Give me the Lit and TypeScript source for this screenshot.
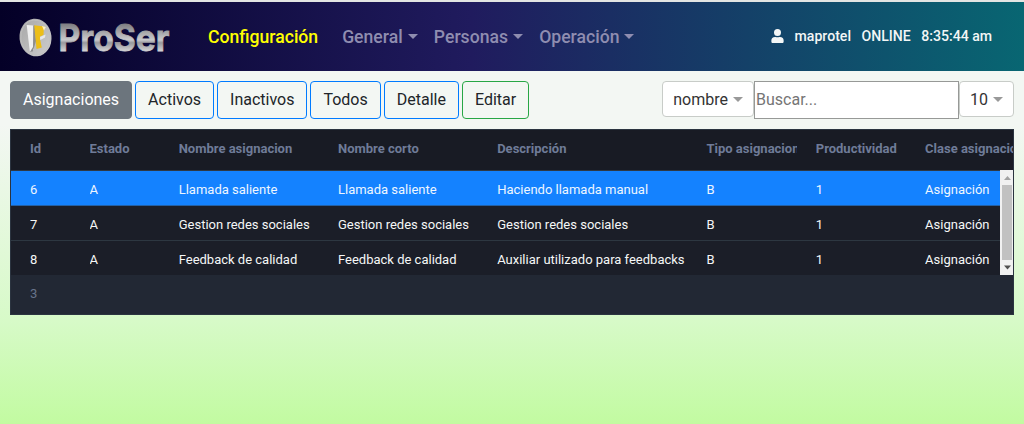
import { LitElement, html, svg, css } from "lit";
import { customElement, property } from "lit/decorators.js";
import { classMap } from "lit/directives/class-map.js";

interface Row {
  cells: string[];
  selected?: boolean;
}

@customElement("brand-logo")
class BrandLogo extends LitElement {
  static styles = css`
    :host { display: block; width: 156px; height: 46px; }
    svg { display: block; }
    .word { font: 700 36.5px Inter, "Liberation Sans", sans-serif; }
  `;
  render() {
    return html`<svg width="156" height="46" viewBox="0 0 156 46">
      ${svg`
      <defs>
        <linearGradient id="metal" gradientUnits="userSpaceOnUse" x1="0" y1="9.5" x2="0" y2="38.5">
          <stop offset="0" stop-color="#77777b"/>
          <stop offset=".4" stop-color="#b0b0b2"/>
          <stop offset=".6" stop-color="#cacacc"/>
          <stop offset=".7" stop-color="#98989c"/>
          <stop offset="1" stop-color="#d6d6d8"/>
        </linearGradient>
        <linearGradient id="disc" x1="0" y1="0" x2="1" y2="1">
          <stop offset="0" stop-color="#a6a6a6"/>
          <stop offset="1" stop-color="#cecece"/>
        </linearGradient>
      </defs>
      <g transform="rotate(-6 19.5 24.5)">
        <ellipse cx="19.5" cy="24.5" rx="16" ry="18.9" fill="url(#disc)"/>
        <ellipse cx="19.5" cy="24.5" rx="14.7" ry="17.5" fill="none" stroke="#bfbfbf" stroke-width=".8"/>
      </g>
      <path d="M10.700 12 17.500 12.500 17.800 37 13.800 38.500Z" fill="#f0f0f0"/>
      <path d="M17.300 12.500 18.700 12.500 20 28 16.800 38.500 14 38.700 17 34Z" fill="#8e8e8e"/>
      <path d="M18.200 12.300 28 13.500 27.500 22 24 23.500 24 26 25.800 34.500 20.500 36 19.500 25Z" fill="#ecbe18"/>
      <path d="M26 13 29.800 14 28 17.500Z" fill="#fff3c0"/>
      <path d="M24 24 29.500 21.500 29 24.500 24.300 27Z" fill="#e8e8e8"/>
      <text class="word" x="42.500" y="37.700" textLength="111" lengthAdjust="spacingAndGlyphs" fill="url(#metal)" stroke="url(#metal)" stroke-width=".8">ProSer</text>`}
    </svg>`;
  }
}

@customElement("tool-button")
class ToolButton extends LitElement {
  @property() variant = "primary";
  static styles = css`
    :host { display: block; }
    button {
      display: block; box-sizing: border-box; height: 38px; padding: 0 12px;
      border: 1px solid #007bff; border-radius: 4px; background: transparent;
      color: #212529; font: 16px/36px Roboto, sans-serif;
    }
    .active { background: #6c757d; border-color: #6c757d; color: #fff; }
    .success { border-color: #28a745; }
  `;
  render() {
    return html`<button class=${this.variant}><slot></slot></button>`;
  }
}

@customElement("data-grid")
class DataGrid extends LitElement {
  @property({ attribute: false }) columns: string[] = [];
  @property({ attribute: false }) rows: Row[] = [];
  static styles = css`
    :host {
      display: block; box-sizing: border-box; height: 186px; overflow: hidden;
      border: 1px solid #2b3440; background: #222834;
      font: 13px/17px Roboto, sans-serif; color: #f5f7f7;
    }
    .line {
      display: grid; box-sizing: border-box; width: 1100px; align-items: center;
      grid-template-columns: 59.5px 89.2px 159.3px 159.2px 209.3px 109.300px 109.3px 1fr;
      padding-left: 19px;
    }
    .line span { overflow: hidden; white-space: nowrap; }
    .head {
      height: 41px; padding-bottom: 3px; background: #181b24; border-bottom: 1px solid #2f3843;
      color: #6f7b98; font-weight: 700;
    }
    .head span { margin-right: 19px; }
    .middle { display: flex; height: 105px; }
    .rows { flex: 1; overflow: hidden; }
    .row { height: 35px; padding-top: 2px; background: #1b1e28; border-bottom: 1px solid #2d3741; }
    .row:last-child { border-bottom-color: #222834; }
    .selected { background: #1482ff; border-bottom-color: #2360a5; color: #eef6ff; }
    .scroll {
      display: flex; flex-direction: column; align-items: center; width: 13px;
      margin-top: -1px; height: 105px; background: #f1f1f1;
    }
    .scroll svg { flex: none; display: block; }
    .thumb { flex: 1; align-self: stretch; margin: 0 1px 0 2px; background: #c1c1c1; }
    .foot { padding: 9px 19px; color: #68748a; }
  `;
  render() {
    return html`
      <div class="line head">${this.columns.map((c) => html`<span>${c}</span>`)}</div>
      <div class="middle">
        <div class="rows">
          ${this.rows.map(
            (r) => html`<div class=${classMap({ line: true, row: true, selected: !!r.selected })}>
              ${r.cells.map((c) => html`<span>${c}</span>`)}
            </div>`,
          )}
        </div>
        <div class="scroll">
          <svg width="13" height="15"><path d="M4 10h7L7.500 6Z" fill="#a3a3a3" /></svg>
          <div class="thumb"></div>
          <svg width="13" height="15"><path d="M4 5.500h7L7.500 9.500Z" fill="#505050" /></svg>
        </div>
      </div>
      <div class="foot">${this.rows.length}</div>
    `;
  }
}

@customElement("app-root")
class AppRoot extends LitElement {
  static styles = css`
    :host {
      display: block; box-sizing: border-box; height: 424px; overflow: hidden;
      background: linear-gradient(#f3f7f3 0, #f3f7f3 125px, #d7fac8 320px, #c2fba1 424px);
      font-family: Roboto, sans-serif;
    }
    header {
      display: flex; align-items: center; box-sizing: border-box; height: 71px;
      padding: 0 32px 0 16px; border-top: 2px solid #e3e5e3;
      background: linear-gradient(to right, #040027 0%, #201b5e 46%, #086672 100%) padding-box;
      font-weight: 500;
    }
    brand-logo { margin-bottom: 2px; }
    nav { display: flex; font-size: 17.6px; line-height: 24px; margin-left: 36px; color: #8f8db0; }
    .current { color: #ff0; margin-right: 24px; }
    .item { display: flex; align-items: center; margin-right: 16.2px; }
    .caret {
      margin-left: 5px; border: 5.28px solid transparent; border-top-color: currentColor; border-bottom: 0;
    }
    .user {
      display: flex; align-items: center; gap: 10.5px; margin-left: auto;
      color: #f3f6f6; font-size: 14.08px; line-height: 20px; padding-bottom: 1px;
    }
    .toolbar { display: flex; gap: 3px; padding: 10px; height: 38px; }
    .filters { display: flex; margin-left: auto; }
    .select {
      display: flex; align-items: center; box-sizing: border-box; height: 36px; padding: 0 10px;
      border: 1px solid #c8ccc8; border-radius: 4px; background: #fff; color: #333; font-size: 16px;
    }
    .select .caret { color: #999; margin-left: 5px; border-width: 5px; border-bottom: 0; margin-top: 1px; }
    input {
      box-sizing: border-box; width: 205px; height: 38px; padding: 0 1px 2px; margin: 0;
      border: 1px solid #979997; border-radius: 0; background: #fff; font: 16px Roboto, sans-serif;
    }
    input::placeholder { color: #757575; }
    data-grid { margin: 0 10px; }
  `;

  private columns = [
    "Id", "Estado", "Nombre asignacion", "Nombre corto", "Descripción",
    "Tipo asignacion", "Productividad", "Clase asignacion",
  ];
  private rows: Row[] = [
    { cells: ["6", "A", "Llamada saliente", "Llamada saliente", "Haciendo llamada manual", "B", "1", "Asignación"], selected: true },
    { cells: ["7", "A", "Gestion redes sociales", "Gestion redes sociales", "Gestion redes sociales", "B", "1", "Asignación"] },
    { cells: ["8", "A", "Feedback de calidad", "Feedback de calidad", "Auxiliar utilizado para feedbacks", "B", "1", "Asignación"] },
  ];

  render() {
    return html`
      <header>
        <brand-logo></brand-logo>
        <nav>
          <span class="current">Configuración</span>
          ${["General", "Personas", "Operación"].map(
            (t) => html`<span class="item">${t}<i class="caret"></i></span>`,
          )}
        </nav>
        <div class="user">
          <svg width="13" height="14" viewBox="0 0 448 512" fill="currentColor">
            <path d="M224 256a128 128 0 1 0 0-256 128 128 0 0 0 0 256zm90 32h-17a174 174 0 0 1-146 0h-17A134 134 0 0 0 0 422v42c0 27 21 48 48 48h352c27 0 48-21 48-48v-42a134 134 0 0 0-134-134z" />
          </svg>
          <span>maprotel</span><span>ONLINE</span><span>8:35:44 am</span>
        </div>
      </header>
      <div class="toolbar">
        <tool-button variant="active">Asignaciones</tool-button>
        <tool-button>Activos</tool-button>
        <tool-button>Inactivos</tool-button>
        <tool-button>Todos</tool-button>
        <tool-button>Detalle</tool-button>
        <tool-button variant="success">Editar</tool-button>
        <div class="filters">
          <div class="select">nombre<i class="caret"></i></div>
          <input placeholder="Buscar..." />
          <div class="select">10<i class="caret"></i></div>
        </div>
      </div>
      <data-grid .columns=${this.columns} .rows=${this.rows}></data-grid>
    `;
  }
}
